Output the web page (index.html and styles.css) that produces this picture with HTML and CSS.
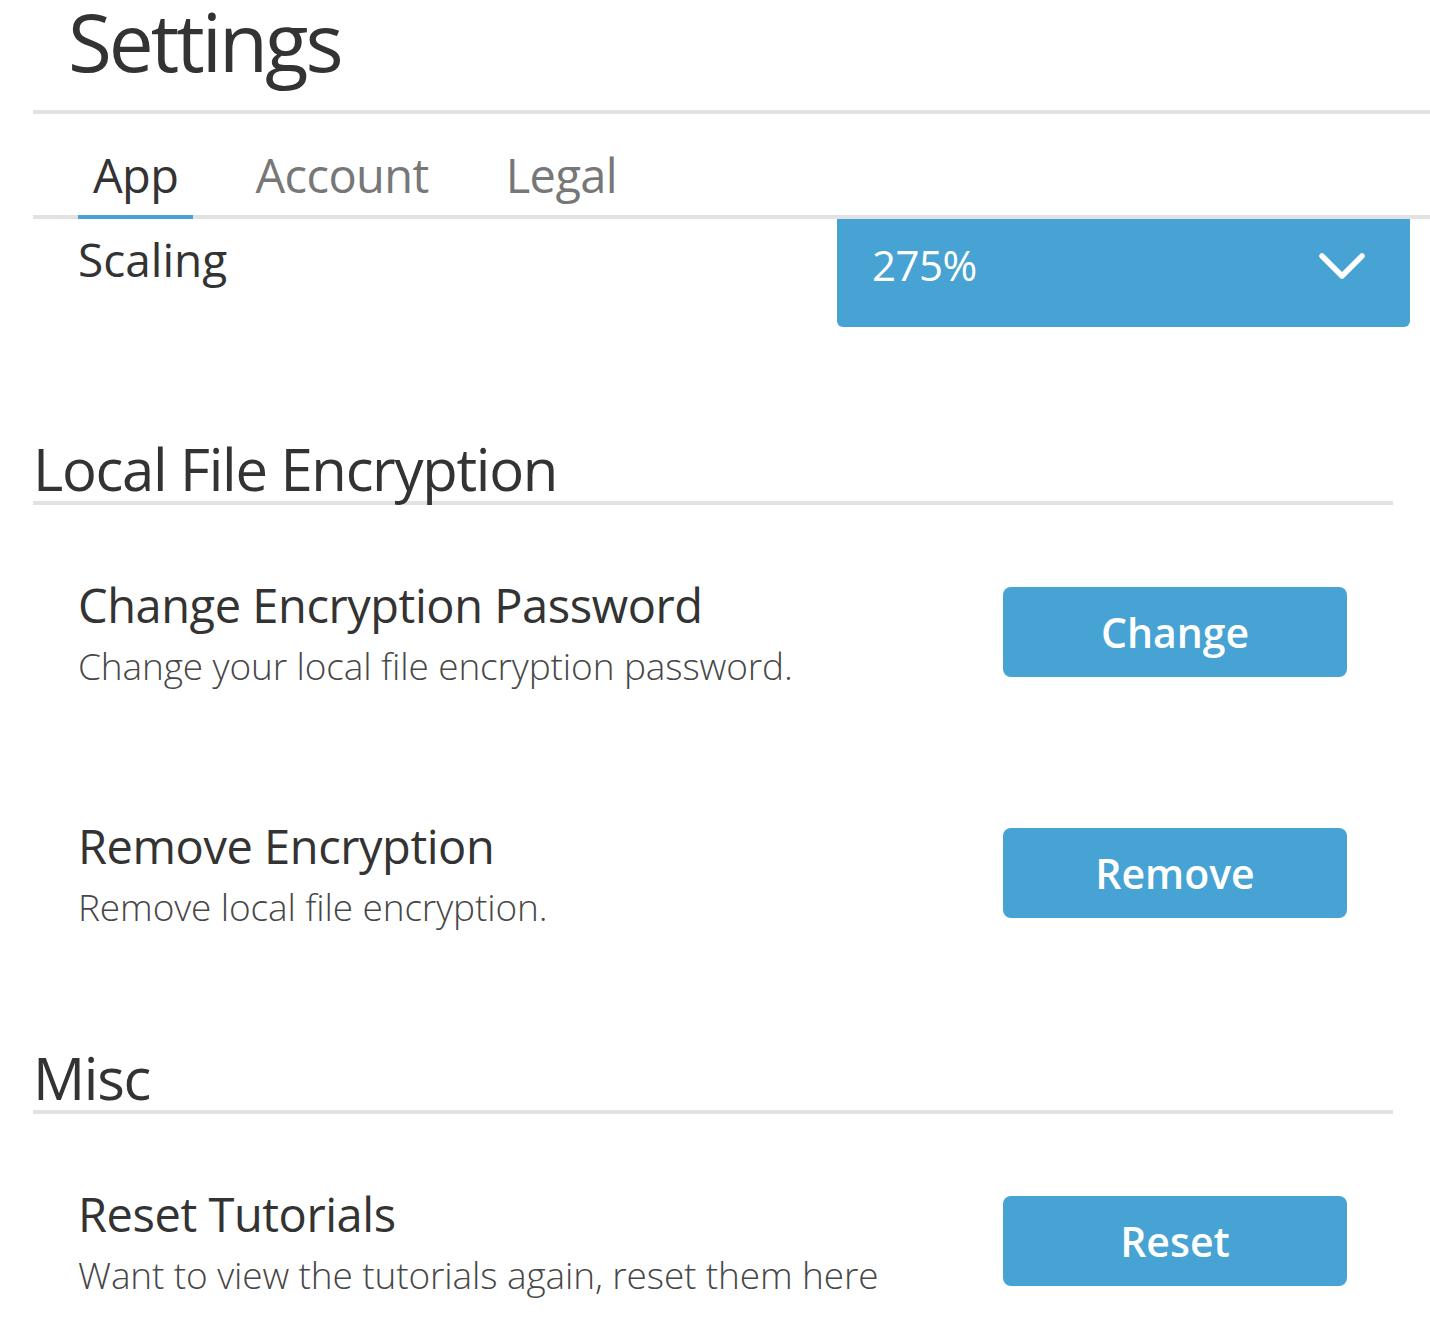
FILE: index.html
```html
<!DOCTYPE html>
<html>
<head>
<meta charset="utf-8">
<link rel="stylesheet" href="styles.css">
</head>
<body>
<div class="page">
  <h1 class="title">Settings</h1>
  <div class="header-rule"></div>
  <nav class="tabs">
    <div class="tab active">App</div>
    <div class="tab">Account</div>
    <div class="tab">Legal</div>
  </nav>
  <div class="scaling-row">
    <div class="scaling-label">Scaling</div>
    <div class="select">
      <span class="select-value">275%</span>
      <svg class="chevron" width="50" height="30" viewBox="0 0 50 30"><path d="M5 5 L25 25 L45 5" fill="none" stroke="#fff" stroke-width="5.5" stroke-linecap="round" stroke-linejoin="round"/></svg>
    </div>
  </div>

  <section class="section first">
    <h2 class="section-title">Local File Encryption</h2>
    <div class="row">
      <div class="row-text">
        <div class="row-title">Change Encryption Password</div>
        <div class="row-desc">Change your local file encryption password.</div>
      </div>
      <button class="btn">Change</button>
    </div>
    <div class="row">
      <div class="row-text">
        <div class="row-title">Remove Encryption</div>
        <div class="row-desc">Remove local file encryption.</div>
      </div>
      <button class="btn">Remove</button>
    </div>
  </section>

  <section class="section second">
    <h2 class="section-title">Misc</h2>
    <div class="row">
      <div class="row-text">
        <div class="row-title">Reset Tutorials</div>
        <div class="row-desc">Want to view the tutorials again, reset them here</div>
      </div>
      <button class="btn">Reset</button>
    </div>
  </section>
</div>
</body>
</html>
```

FILE: styles.css
```css
html, body {
  margin: 0;
  padding: 0;
  background: #fff;
}
body {
  font-family: "Open Sans", "Noto Sans", sans-serif;
  color: #333;
}
.page {
  padding-left: 33px;
}
.title {
  margin: 0 0 0 35px;
  height: 110px;
  font-size: 80px;
  font-weight: 400;
  line-height: 82px;
  letter-spacing: -3px;
  color: #333;
}
.header-rule {
  height: 4px;
  background: #e2e2e2;
}
.tabs {
  display: flex;
  gap: 47px;
  padding-left: 45px;
  height: 105px;
  border-bottom: 4px solid #e2e2e2;
  box-sizing: border-box;
}
.tab {
  box-sizing: border-box;
  height: 105px;
  margin-bottom: -4px;
  padding: 38px 15px 0;
  font-size: 47px;
  line-height: 47px;
  letter-spacing: -0.6px;
  color: #777;
  border-bottom: 4px solid transparent;
}
.tab.active {
  color: #333;
  border-bottom-color: #47a3d3;
}
.scaling-row {
  display: flex;
  justify-content: space-between;
  align-items: flex-start;
  padding-left: 45px;
  padding-right: 20px;
}
.scaling-label {
  padding-top: 17px;
  font-size: 46px;
  line-height: 46px;
}
.select {
  box-sizing: border-box;
  width: 573px;
  height: 108px;
  padding: 0 43px 0 35px;
  background: #47a3d3;
  border-radius: 0 0 6px 6px;
  display: flex;
  justify-content: space-between;
  align-items: flex-start;
}
.select-value {
  padding-top: 25px;
  color: #fff;
  font-size: 42px;
  line-height: 42px;
  letter-spacing: -0.5px;
}
.chevron {
  margin-top: 32px;
}
.section {
  width: 1360px;
}
.section.first {
  margin-top: 113px;
}
.section.second {
  margin-top: 117px;
}
.section-title {
  margin: 0;
  padding-bottom: 3px;
  font-size: 58px;
  font-weight: 400;
  line-height: 58px;
  letter-spacing: -1.3px;
  border-bottom: 4px solid #e2e2e2;
}
.row {
  display: flex;
  justify-content: space-between;
  align-items: flex-start;
  padding: 0 46px 0 45px;
  margin-top: 72px;
}
.row + .row {
  margin-top: 127px;
}
.row-title {
  font-size: 47px;
  line-height: 56px;
  letter-spacing: -0.45px;
  color: #333;
}
.row-desc {
  margin-top: 8px;
  font-size: 37px;
  font-weight: 300;
  line-height: 50px;
  letter-spacing: -0.12px;
  color: #474747;
}
.btn {
  margin-top: 10px;
  width: 344px;
  height: 90px;
  padding: 0;
  border: none;
  border-radius: 8px;
  background: #47a3d3;
  color: #fff;
  font-family: "Open Sans", "Noto Sans", sans-serif;
  font-size: 41px;
  font-weight: 600;
}
```
